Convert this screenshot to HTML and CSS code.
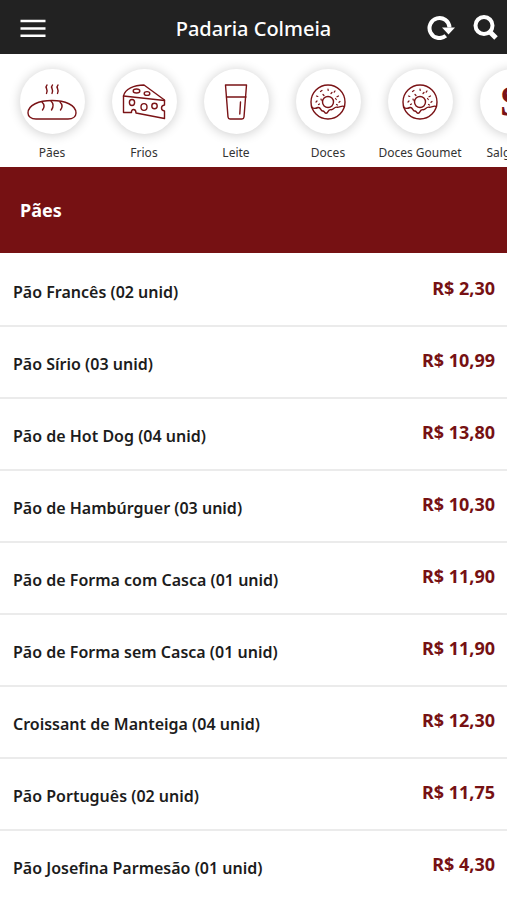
FILE: index.html
```html
<!DOCTYPE html>
<html lang="pt-BR">

<head>
  <meta charset="utf-8" />
  <meta name="viewport" content="width=device-width, initial-scale=1" />
  <title>Padaria Colmeia</title>
  <link rel="stylesheet" href="styles.css">
</head>

<body>
  <header class="topbar">
    <button class="icon-button" type="button" aria-label="Menu">
      <svg width="26" height="20" viewBox="0 0 26 20" fill="none" stroke="currentColor" stroke-width="2.4">
        <path d="M0.5 3h25M0.5 10.500h25M0.5 17.800h25" />
      </svg>
    </button>
    <h1 class="topbar-title">Padaria Colmeia</h1>
    <div class="topbar-actions">
      <button class="icon-button" type="button" aria-label="Atualizar">
        <svg width="28" height="26" viewBox="0 0 28 26">
          <path d="M18.800 21.800A10 10 0 1 1 22.500 13.500" fill="none" stroke="currentColor" stroke-width="4" />
          <path d="M15 13.500h13l-6.500 7z" fill="currentColor" />
        </svg>
      </button>
      <button class="icon-button" type="button" aria-label="Buscar">
        <svg width="26" height="26" viewBox="0 0 26 26" fill="none" stroke="currentColor" stroke-width="4">
          <circle cx="11" cy="11.500" r="8.500" />
          <path d="M16.500 17.500l6.500 6.500" stroke-width="5" />
        </svg>
      </button>
    </div>
  </header>

  <nav class="categories">
    <a class="category" href="#paes">
      <span class="category-icon">
        <svg width="50" height="40" viewBox="0 0 50 40">
          <path d="M9 37C4 37 1 34.500 1 31C1 23 12 18.500 25 18.500s24 4.500 24 12.500c0 3.500-3 6-8 6z" />
          <path d="M15 20c3 3 2.500 5.500.5 8M24 19c3 3 2.500 6 .5 9M33 20c3 3 2.500 5.500.5 8" />
          <path d="M20 3c-3 3 2 4-.5 8.500M25.500 3c-3 3 2 4-.5 8.500M31 3c-3 3 2 4-.5 8.500" />
        </svg>
      </span>
      <span class="category-label">Pães</span>
    </a>
    <a class="category" href="#frios">
      <span class="category-icon">
        <svg width="44" height="36" viewBox="0 0 44 36">
          <path d="M1.500 12v16.500h8c-.5-4 4.500-4 4.500.5l28.500 5.500v-7.500c-4-.5-4-5.500 0-6v-5L22 1C12 1 3 5 1.500 12z" />
          <path d="M1.500 12l41 4.500" />
          <ellipse cx="14.500" cy="7" rx="3.300" ry="2" />
          <ellipse cx="25" cy="9.500" rx="2.800" ry="1.900" />
          <ellipse cx="10" cy="18.500" rx="2.600" ry="3" />
          <ellipse cx="22" cy="23" rx="3" ry="3.400" />
          <circle cx="32.500" cy="22" r="2.700" />
        </svg>
      </span>
      <span class="category-label">Frios</span>
    </a>
    <a class="category" href="#leite">
      <span class="category-icon">
        <svg width="24" height="36" viewBox="0 0 24 36">
          <path d="M1.500 1h21l-2.500 32q-.2 2-2 2H6q-1.800 0-2-2z" />
          <path d="M2.500 13h19.500M16.500 18l-.7 12" />
        </svg>
      </span>
      <span class="category-label">Leite</span>
    </a>
    <a class="category" href="#doces">
      <span class="category-icon">
        <svg width="36" height="36" viewBox="0 0 36 36">
          <circle cx="18" cy="18" r="17" />
          <circle cx="18" cy="18" r="5.500" />
          <path d="M1.500 23c2 2 4.500 1.500 6.500.5 3-.5 2.500 3.500 4.500 3.500 2-.5 1.500 2 3.500 2.200 2.500.3 1.500-4 5-3.500 2.500.4 3-3 6-2.500 3 .4 5-2.500 7.500-.5" />
          <path class="sprinkles" d="M10.500 7.500l1.500-1M18 5l.2 1.500M25 7l-.8 1.200M6.500 12l1.300.5M13 10.500l1 1M21 9.500l1-1M28.500 12l-1.500.8M6 18l1-1M11 15l.3 1.200M25.500 14.500l.8 1M30 17.500l-1 .8M8.500 20.500l1-.5M27.500 21l-1-.5" />
        </svg>
      </span>
      <span class="category-label">Doces</span>
    </a>
    <a class="category" href="#doces-goumet">
      <span class="category-icon">
        <svg width="36" height="36" viewBox="0 0 36 36">
          <circle cx="18" cy="18" r="17" />
          <circle cx="18" cy="18" r="5.500" />
          <path d="M1.500 23c2 2 4.500 1.500 6.500.5 3-.5 2.500 3.500 4.500 3.500 2-.5 1.500 2 3.500 2.200 2.500.3 1.500-4 5-3.500 2.500.4 3-3 6-2.500 3 .4 5-2.500 7.500-.5" />
          <path class="sprinkles" d="M10.500 7.500l1.500-1M18 5l.2 1.500M25 7l-.8 1.200M6.500 12l1.300.5M13 10.500l1 1M21 9.500l1-1M28.500 12l-1.500.8M6 18l1-1M11 15l.3 1.200M25.500 14.500l.8 1M30 17.500l-1 .8M8.500 20.500l1-.5M27.500 21l-1-.5" />
        </svg>
      </span>
      <span class="category-label">Doces Goumet</span>
    </a>
    <a class="category" href="#salgados">
      <span class="category-icon category-letter">S</span>
      <span class="category-label">Salgados</span>
    </a>
  </nav>

  <main>
    <h2 class="section-title" id="paes">Pães</h2>
    <ul class="products">
      <li class="product">
        <span class="product-name">Pão Francês (02 unid)</span>
        <span class="product-price">R$ 2,30</span>
      </li>
      <li class="product">
        <span class="product-name">Pão Sírio (03 unid)</span>
        <span class="product-price">R$ 10,99</span>
      </li>
      <li class="product">
        <span class="product-name">Pão de Hot Dog (04 unid)</span>
        <span class="product-price">R$ 13,80</span>
      </li>
      <li class="product">
        <span class="product-name">Pão de Hambúrguer (03 unid)</span>
        <span class="product-price">R$ 10,30</span>
      </li>
      <li class="product">
        <span class="product-name">Pão de Forma com Casca (01 unid)</span>
        <span class="product-price">R$ 11,90</span>
      </li>
      <li class="product">
        <span class="product-name">Pão de Forma sem Casca (01 unid)</span>
        <span class="product-price">R$ 11,90</span>
      </li>
      <li class="product">
        <span class="product-name">Croissant de Manteiga (04 unid)</span>
        <span class="product-price">R$ 12,30</span>
      </li>
      <li class="product">
        <span class="product-name">Pão Português (02 unid)</span>
        <span class="product-price">R$ 11,75</span>
      </li>
      <li class="product">
        <span class="product-name">Pão Josefina Parmesão (01 unid)</span>
        <span class="product-price">R$ 4,30</span>
      </li>
    </ul>
  </main>
</body>

</html>
```
FILE: styles.css
```css
* {
  margin: 0;
  padding: 0;
  box-sizing: border-box;
}

body {
  font-family: "Noto Sans", "Open Sans", sans-serif;
  background-color: #fff;
  color: #1c1c1c;
  overflow-x: hidden;
}

.topbar {
  display: grid;
  grid-template-columns: 1fr auto 1fr;
  align-items: center;
  padding: 12px 8px;
  background-color: #222;
  color: #fff;
}

.topbar-title {
  padding-top: 4px;
  font-size: 20px;
  line-height: 26px;
  font-weight: 500;
}

.topbar-actions {
  display: flex;
  justify-content: flex-end;
  gap: 18px;
}

.icon-button {
  display: flex;
  border: 0;
  background: none;
  color: inherit;
  cursor: pointer;
}

.topbar > .icon-button {
  justify-self: start;
  padding: 2px 12px 0;
}

.categories {
  display: flex;
  padding: 15px 6px 6px;
  overflow: hidden;
}

.category {
  flex: 0 0 92px;
  display: flex;
  flex-direction: column;
  align-items: center;
  gap: 10px;
  color: #333;
  text-decoration: none;
}

.category-icon {
  display: flex;
  align-items: center;
  justify-content: center;
  width: 65px;
  height: 65px;
  border-radius: 50%;
  background-color: #fff;
  box-shadow: 0 1px 12px rgba(0, 0, 0, 0.2);
}

.category-icon svg {
  fill: none;
  stroke: #7a1316;
  stroke-width: 1.4;
  stroke-linecap: round;
  stroke-linejoin: round;
}

.category-icon .sprinkles {
  stroke-width: 1.2;
}

.category-letter {
  font: bold 44px "Liberation Serif", serif;
  color: #7a1316;
}

.category-label {
  font-size: 12px;
  line-height: 17px;
  white-space: nowrap;
}

.section-title {
  padding: 29px 20px;
  font-size: 18px;
  line-height: 28px;
  font-weight: 700;
  background-color: #761113;
  color: #fff;
}

.products {
  list-style: none;
}

.product {
  display: flex;
  justify-content: space-between;
  height: 72px;
  padding: 20px 12px 0 13px;
  border-top: 2px solid #ebebeb;
}

.product:first-child {
  border-top-color: transparent;
}

.product-name {
  padding-top: 4px;
  font-size: 16px;
  line-height: 26px;
  font-weight: 600;
}

.product-price {
  font-size: 18px;
  line-height: 26px;
  font-weight: 700;
  color: #761113;
}
```
